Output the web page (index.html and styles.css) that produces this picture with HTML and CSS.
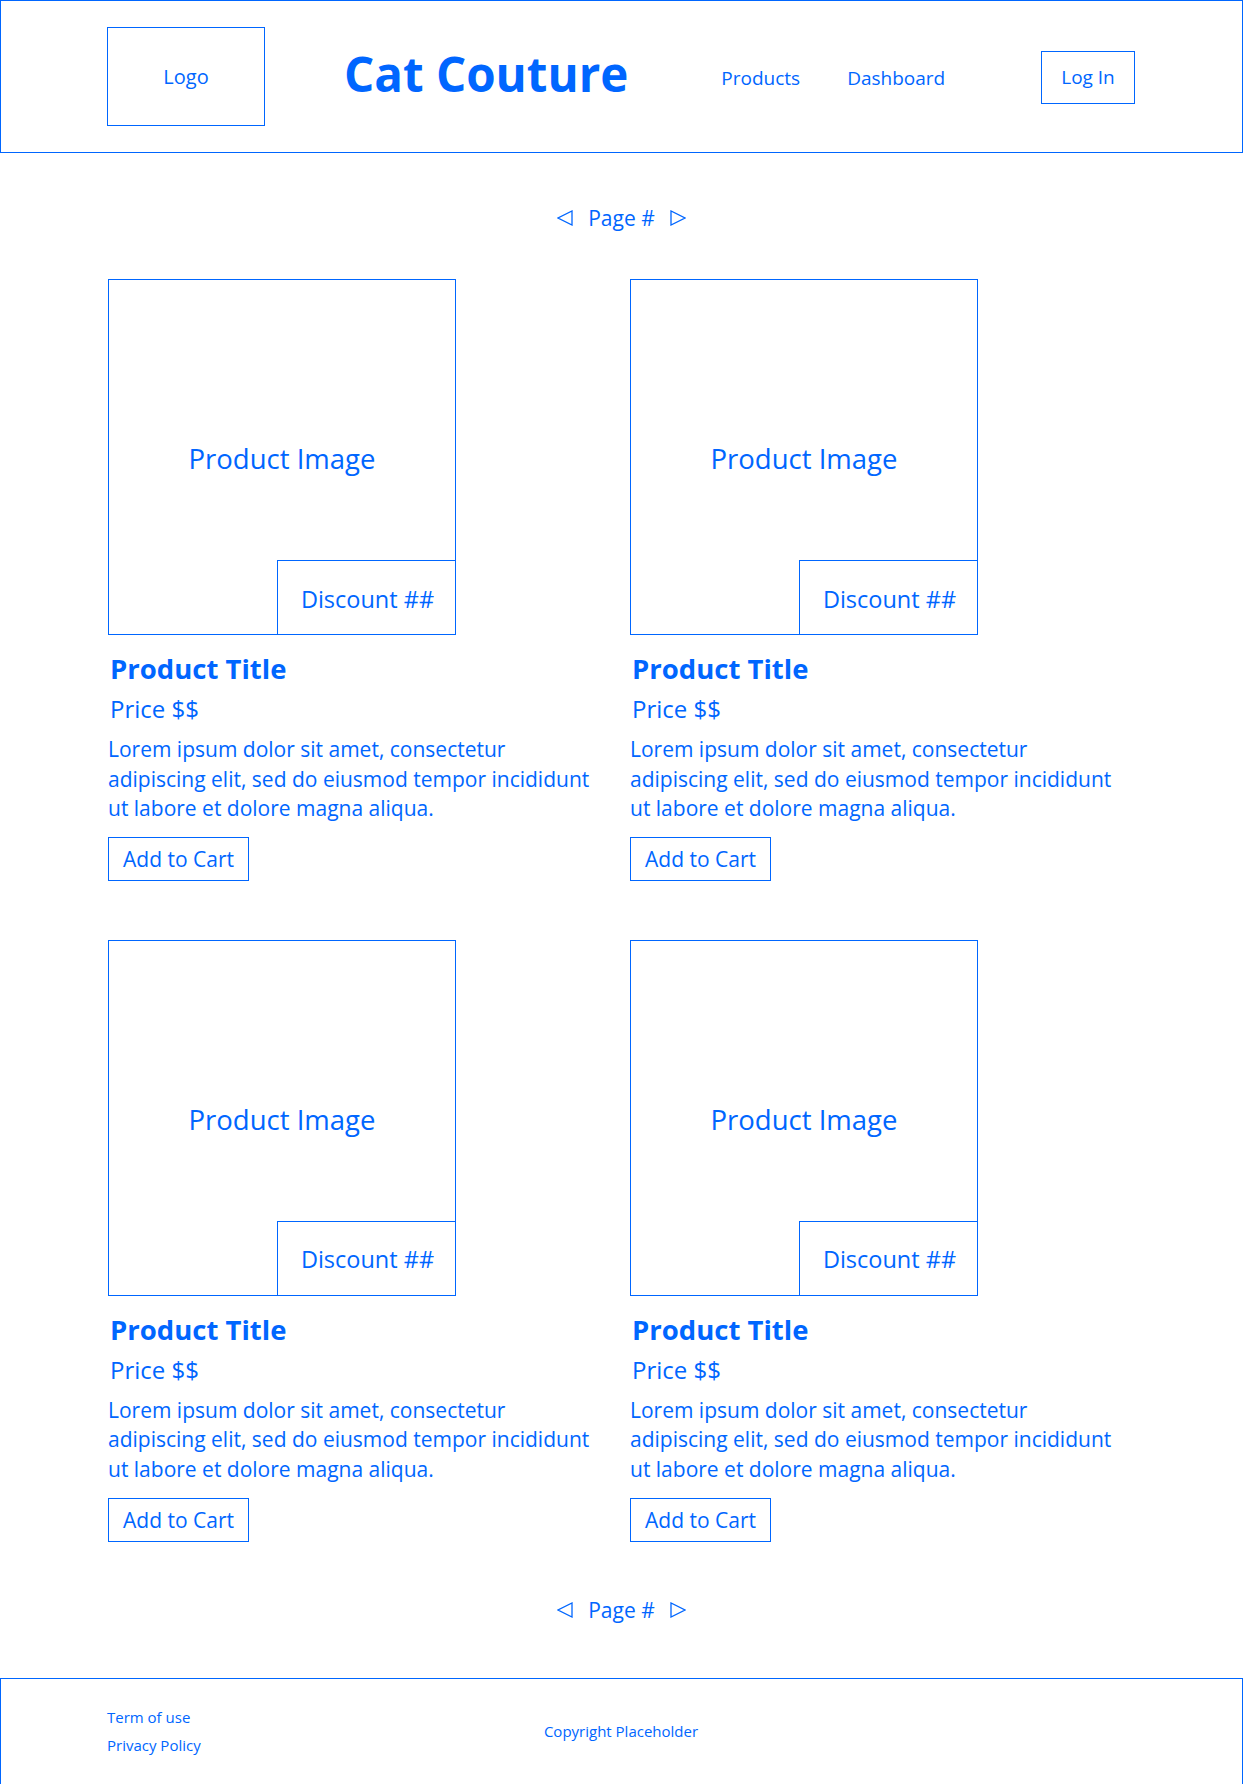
FILE: index.html
```html
<!DOCTYPE html>
<html lang="en">
<head>
<meta charset="utf-8">
<title>Cat Couture</title>
<link rel="stylesheet" href="styles.css">
</head>
<body>
<header class="site-header">
  <div class="logo">Logo</div>
  <h1 class="brand">Cat Couture</h1>
  <nav class="nav">
    <a class="nav-link" href="#">Products</a>
    <a class="nav-link" href="#">Dashboard</a>
  </nav>
  <button class="login">Log In</button>
</header>

<main class="content">
  <div class="pager pager-top">
    <svg class="tri" width="16" height="16" viewBox="0 0 16 16"><polygon points="15,1 15,15 1,8" fill="none" stroke="currentColor" stroke-width="1.3" stroke-linejoin="miter"/></svg>
    <span class="pager-label">Page #</span>
    <svg class="tri" width="16" height="16" viewBox="0 0 16 16"><polygon points="1,1 1,15 15,8" fill="none" stroke="currentColor" stroke-width="1.3" stroke-linejoin="miter"/></svg>
  </div>

  <section class="grid">
    <article class="card">
      <div class="image">Product Image<div class="discount">Discount ##</div></div>
      <h2 class="title">Product Title</h2>
      <p class="price">Price $$</p>
      <p class="desc">Lorem ipsum dolor sit amet, consectetur adipiscing elit, sed do eiusmod tempor incididunt ut labore et dolore magna aliqua.</p>
      <button class="cart">Add to Cart</button>
    </article>
    <article class="card">
      <div class="image">Product Image<div class="discount">Discount ##</div></div>
      <h2 class="title">Product Title</h2>
      <p class="price">Price $$</p>
      <p class="desc">Lorem ipsum dolor sit amet, consectetur adipiscing elit, sed do eiusmod tempor incididunt ut labore et dolore magna aliqua.</p>
      <button class="cart">Add to Cart</button>
    </article>
    <article class="card">
      <div class="image">Product Image<div class="discount">Discount ##</div></div>
      <h2 class="title">Product Title</h2>
      <p class="price">Price $$</p>
      <p class="desc">Lorem ipsum dolor sit amet, consectetur adipiscing elit, sed do eiusmod tempor incididunt ut labore et dolore magna aliqua.</p>
      <button class="cart">Add to Cart</button>
    </article>
    <article class="card">
      <div class="image">Product Image<div class="discount">Discount ##</div></div>
      <h2 class="title">Product Title</h2>
      <p class="price">Price $$</p>
      <p class="desc">Lorem ipsum dolor sit amet, consectetur adipiscing elit, sed do eiusmod tempor incididunt ut labore et dolore magna aliqua.</p>
      <button class="cart">Add to Cart</button>
    </article>
  </section>

  <div class="pager pager-bottom">
    <svg class="tri" width="16" height="16" viewBox="0 0 16 16"><polygon points="15,1 15,15 1,8" fill="none" stroke="currentColor" stroke-width="1.3" stroke-linejoin="miter"/></svg>
    <span class="pager-label">Page #</span>
    <svg class="tri" width="16" height="16" viewBox="0 0 16 16"><polygon points="1,1 1,15 15,8" fill="none" stroke="currentColor" stroke-width="1.3" stroke-linejoin="miter"/></svg>
  </div>
</main>

<footer class="site-footer">
  <div class="legal">
    <a class="legal-link" href="#">Term of use</a>
    <a class="legal-link" href="#">Privacy Policy</a>
  </div>
  <div class="copyright">Copyright Placeholder</div>
  <div class="spacer"></div>
</footer>
</body>
</html>
```

FILE: styles.css
```css
* { box-sizing: border-box; }

html, body {
  margin: 0;
  padding: 0;
  background: #ffffff;
}

body {
  font-family: "Open Sans", "Noto Sans", sans-serif;
  color: #0066ff;
  width: 1243px;
}

a { color: inherit; text-decoration: none; }

/* Header */
.site-header {
  height: 153px;
  border: 1px solid #0066ff;
  display: flex;
  align-items: center;
  padding: 0 107px 0 106px;
}

.logo {
  width: 158px;
  height: 99px;
  border: 1px solid #0066ff;
  display: flex;
  align-items: center;
  justify-content: center;
  font-size: 20px;
  margin-bottom: 1px;
  padding-top: 1px;
}

.brand {
  margin: 0 0 7px 79px;
  font-size: 47.5px;
  font-weight: 700;
  line-height: 1.2;
  letter-spacing: 0;
  white-space: nowrap;
}

.nav {
  display: flex;
  gap: 47px;
  margin-left: 93px;
  margin-top: 2px;
}

.nav-link {
  font-size: 19px;
  line-height: 26px;
}

.login {
  margin-left: auto;
  font-family: inherit;
  color: inherit;
  background: #fff;
  border: 1px solid #0066ff;
  font-size: 19px;
  line-height: 27px;
  padding: 0;
  width: 94px;
  height: 53px;
  white-space: nowrap;
  text-align: center;
  margin-top: 1px;
}

/* Pager */
.content {
  padding: 0 108px;
}

.pager {
  display: flex;
  justify-content: center;
  align-items: center;
  gap: 15px;
  height: 30px;
}

.pager-top { margin-top: 50px; margin-bottom: 46px; }
.pager-bottom { margin-top: 53px; margin-bottom: 53px; }

.pager-label {
  font-size: 21px;
  line-height: 30px;
}

.tri { display: block; }

/* Grid */
.grid {
  display: grid;
  grid-template-columns: 490px 490px;
  column-gap: 32px;
  row-gap: 59px;
}

.card { display: flex; flex-direction: column; align-items: flex-start; }

.image {
  position: relative;
  width: 348px;
  height: 356px;
  border: 1px solid #0066ff;
  display: flex;
  align-items: center;
  justify-content: center;
  font-size: 27.5px;
  padding-top: 3px;
}

.discount {
  position: absolute;
  right: 0;
  bottom: 0;
  width: 178px;
  height: 74px;
  border-left: 1px solid #0066ff;
  border-top: 1px solid #0066ff;
  display: flex;
  align-items: center;
  justify-content: center;
  font-size: 23.5px;
  padding: 2px 0 0 2px;
}

.title {
  margin: 16px 0 0 2px;
  font-size: 27.5px;
  font-weight: 700;
  line-height: 36px;
}

.price {
  margin: 6px 0 0 2px;
  font-size: 24px;
  line-height: 32px;
}

.desc {
  margin: 10px 0 0 0;
  font-size: 21px;
  line-height: 29.6px;
}

.cart {
  margin-top: 13px;
  font-family: inherit;
  color: inherit;
  background: #fff;
  border: 1px solid #0066ff;
  font-size: 21px;
  line-height: 28px;
  padding: 7px 0;
  width: 141px;
  height: 44px;
}

/* Footer */
.site-footer {
  height: 107px;
  border: 1px solid #0066ff;
  display: grid;
  grid-template-columns: 1fr auto 1fr;
  align-items: center;
  padding: 0 107px 0 106px;
}

.legal {
  display: flex;
  flex-direction: column;
}

.legal-link {
  font-size: 15px;
  line-height: 28px;
}

.copyright {
  font-size: 15px;
  line-height: 28px;
}
```
